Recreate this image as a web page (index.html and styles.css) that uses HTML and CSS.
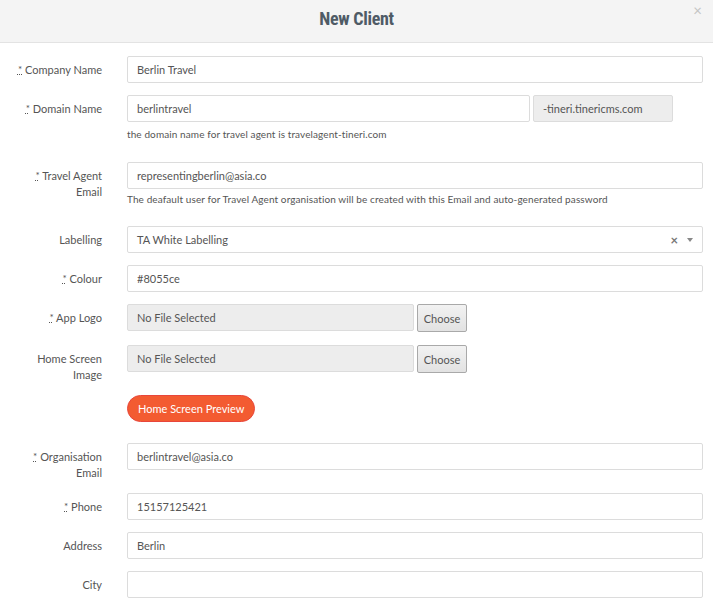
FILE: index.html
```html
<!DOCTYPE html>
<html lang="en">
<head>
    <meta charset="UTF-8">
    <title>New Client</title>
    <link rel="stylesheet" href="styles.css">
</head>
<body>
    <div class="modal">
        <div class="modal-header">
            <h2>New Client</h2>
            <span class="close">&times;</span>
        </div>
        <form class="modal-body">
            <div class="row">
                <label><abbr title="required">*</abbr> Company Name</label>
                <div class="control"><input type="text" value="Berlin Travel"></div>
            </div>
            <div class="row">
                <label><abbr title="required">*</abbr> Domain Name</label>
                <div class="control">
                    <div class="group">
                        <input type="text" value="berlintravel">
                        <span class="addon">-tineri.tinericms.com</span>
                    </div>
                    <p class="help">the domain name for travel agent is travelagent-tineri.com</p>
                </div>
            </div>
            <div class="row">
                <label><abbr title="required">*</abbr> Travel Agent Email</label>
                <div class="control">
                    <input type="text" value="representingberlin@asia.co">
                    <p class="help help-tight">The deafault user for Travel Agent organisation will be created with this Email and auto-generated password</p>
                </div>
            </div>
            <div class="row">
                <label>Labelling</label>
                <div class="control">
                    <div class="select">
                        <span>TA White Labelling</span>
                        <span class="clear">&times;</span>
                        <span class="arrow"></span>
                    </div>
                </div>
            </div>
            <div class="row">
                <label><abbr title="required">*</abbr> Colour</label>
                <div class="control"><input type="text" value="#8055ce"></div>
            </div>
            <div class="row row-file">
                <label><abbr title="required">*</abbr> App Logo</label>
                <div class="control">
                    <div class="file">
                        <span class="file-name">No File Selected</span>
                        <button type="button" class="choose">Choose</button>
                    </div>
                </div>
            </div>
            <div class="row">
                <label>Home Screen Image</label>
                <div class="control">
                    <div class="file">
                        <span class="file-name">No File Selected</span>
                        <button type="button" class="choose">Choose</button>
                    </div>
                </div>
            </div>
            <div class="row row-btn">
                <label></label>
                <div class="control"><button type="button" class="preview">Home Screen Preview</button></div>
            </div>
            <div class="row">
                <label><abbr title="required">*</abbr> Organisation Email</label>
                <div class="control"><input type="text" value="berlintravel@asia.co"></div>
            </div>
            <div class="row">
                <label><abbr title="required">*</abbr> Phone</label>
                <div class="control"><input type="text" value="15157125421"></div>
            </div>
            <div class="row">
                <label>Address</label>
                <div class="control"><input type="text" value="Berlin"></div>
            </div>
            <div class="row">
                <label>City</label>
                <div class="control"><input type="text" value=""></div>
            </div>
        </form>
    </div>
</body>
</html>
```

FILE: styles.css
```css
body {
    margin: 0;
    font-family: Lato, "Open Sans", sans-serif;
    font-size: 11px;
    color: #555;
    background-color: #fff;
}

.modal {
    width: 713px;
}

.modal-header {
    position: relative;
    height: 42px;
    background-color: #f4f4f4;
    border-bottom: 1px solid #e3e3e3;
    text-align: center;
}

.modal-header h2 {
    margin: 0;
    font-family: "Liberation Sans Narrow", "Roboto Condensed", "Roboto", sans-serif;
    font-size: 18px;
    font-weight: bold;
    line-height: 37px;
    letter-spacing: -0.3px;
    color: #4f5b66;
}

.close {
    position: absolute;
    top: 1px;
    right: 11px;
    font-size: 15px;
    color: #c4c4c4;
}

.modal-body {
    margin: 0;
    padding: 13px 10px 0 10px;
}

.row {
    display: flex;
    margin-bottom: 12px;
}

.row label {
    width: 92px;
    flex-shrink: 0;
    text-align: right;
    padding-top: 6px;
    line-height: 16px;
}

abbr {
    text-decoration: underline dotted;
    font-size: 10px;
    vertical-align: top;
    line-height: 14px;
}

.control {
    flex: 1;
    margin-left: 25px;
}

input[type="text"] {
    box-sizing: border-box;
    width: 100%;
    height: 27px;
    padding: 0 9px;
    border: 1px solid #dcdcdc;
    border-radius: 2px;
    font-family: Lato, sans-serif;
    font-size: 11px;
    color: #555;
}

.group {
    display: flex;
}

.group input[type="text"] {
    width: 403px;
}

.addon {
    box-sizing: border-box;
    width: 140px;
    height: 27px;
    margin-left: 3px;
    padding: 0 9px;
    line-height: 25px;
    background-color: #ededed;
    border: 1px solid #dcdcdc;
    border-radius: 2px;
}

.help {
    margin: 5px 0 0 0;
    font-size: 10px;
    line-height: 14px;
    padding-bottom: 9px;
    letter-spacing: 0.1px;
}

.help-tight {
    margin-top: 3px;
    padding-bottom: 8px;
}

.select {
    box-sizing: border-box;
    display: flex;
    align-items: center;
    height: 27px;
    padding: 0 9px;
    border: 1px solid #dcdcdc;
    border-radius: 2px;
}

.select span:first-child {
    flex: 1;
}

.select .clear {
    font-size: 13px;
    font-weight: bold;
    color: #777;
    margin-right: 9px;
}

.select .arrow {
    width: 0;
    height: 0;
    border-left: 3px solid transparent;
    border-right: 3px solid transparent;
    border-top: 4px solid #888;
}

.file {
    display: flex;
}

.file-name {
    box-sizing: border-box;
    width: 287px;
    height: 27px;
    padding: 0 9px;
    line-height: 25px;
    background-color: #ededed;
    border: 1px solid #dcdcdc;
    border-radius: 2px;
}

.choose {
    height: 28px;
    width: 50px;
    margin-left: 3px;
    padding: 0;
    font-family: Lato, sans-serif;
    font-size: 11px;
    color: #555;
    background: linear-gradient(#f2f2f2, #e2e2e2);
    border: 1px solid #a9a9a9;
    border-radius: 2px;
}

.row-file {
    margin-bottom: 13px;
}

.row-btn {
    margin-top: 9px;
    margin-bottom: 21px;
}

.preview {
    height: 27px;
    padding: 0 10px;
    font-family: Lato, sans-serif;
    font-size: 11px;
    color: #fff;
    background-color: #f35b31;
    border: 1px solid #e8463b;
    border-radius: 14px;
}
```
